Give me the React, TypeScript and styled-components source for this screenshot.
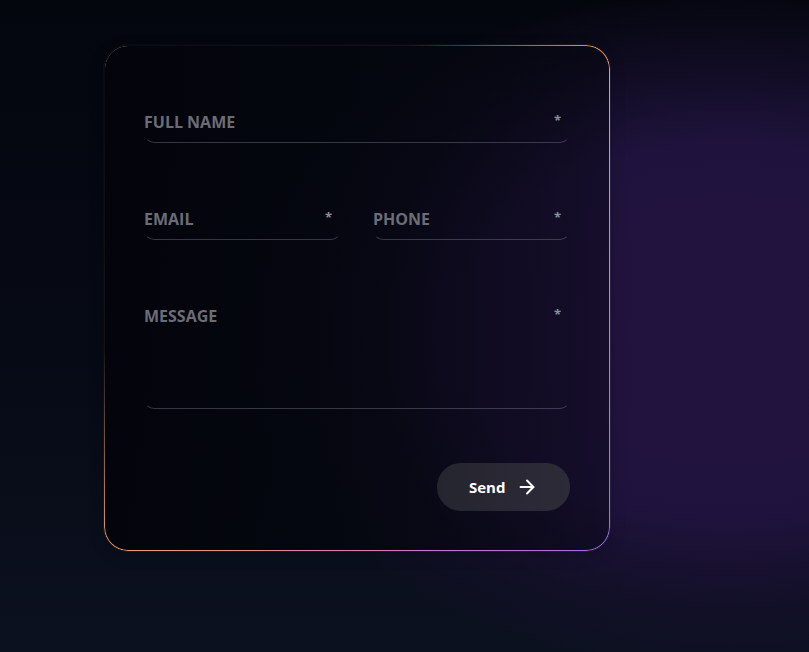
import React from "react";
import styled, { createGlobalStyle } from "styled-components";
import { ArrowRight } from "lucide-react";

const Global = createGlobalStyle`
  html, body { margin: 0; padding: 0; }
  body {
    width: 809px;
    height: 652px;
    overflow: hidden;
    font-family: "Open Sans", "Noto Sans", sans-serif;
    background: #05070f;
  }
  * { box-sizing: border-box; }
`;

const Page = styled.div`
  position: relative;
  width: 809px;
  height: 652px;
  padding: 45px 0 0 104px;
  background:
    radial-gradient(ellipse 500px 340px at 730px 330px, rgba(34, 18, 62, 1) 0%, rgba(32, 19, 62, 0.96) 55%, rgba(26, 16, 50, 0.5) 80%, rgba(20, 12, 40, 0) 100%),
    linear-gradient(180deg, #04060e 0%, #060a15 55%, #0c1120 100%);
`;

const Card = styled.form`
  position: relative;
  width: 506px;
  height: 506px;
  border-radius: 24px;
  padding: 50px 40px 39px;
  display: flex;
  flex-direction: column;
  background: linear-gradient(90deg, rgba(3, 4, 11, 0.95) 0%, rgba(4, 6, 14, 0.88) 45%, rgba(6, 6, 16, 0.4) 100%);
  box-shadow: 0 0 0 1px rgba(255, 255, 255, 0.06), 0 4px 16px rgba(0, 0, 0, 0.18);

  &::before {
    content: "";
    position: absolute;
    inset: 0;
    border-radius: 24px;
    padding: 1px;
    background: linear-gradient(135deg, #f0a35c 0%, #f2a060 48%, #e87aa8 72%, #9b6cf0 100%);
    -webkit-mask:
      linear-gradient(#000 0 0) content-box,
      linear-gradient(#000 0 0);
    -webkit-mask-composite: xor;
    mask-composite: exclude;
    pointer-events: none;
  }
  &::after {
    content: "";
    position: absolute;
    inset: -1px;
    border-radius: 25px;
    pointer-events: none;
    background: linear-gradient(135deg, rgba(8, 10, 20, 1) 0%, rgba(8, 10, 20, 0.95) 30%, rgba(8, 10, 20, 0) 50%);
    padding: 2px;
    -webkit-mask:
      linear-gradient(#000 0 0) content-box,
      linear-gradient(#000 0 0);
    -webkit-mask-composite: xor;
    mask-composite: exclude;
  }
`;

const Row = styled.div`
  display: flex;
  gap: 32px;
`;

const Field = styled.label<{ $tall?: boolean; $mt?: number }>`
  position: relative;
  flex: 1;
  display: flex;
  align-items: flex-start;
  justify-content: space-between;
  height: ${(p) => (p.$tall ? 120 : 48)}px;
  margin-top: ${(p) => p.$mt ?? 0}px;
  padding: 15px 8px 0 0;
  border: 1px solid transparent;
  border-bottom-color: rgba(160, 160, 180, 0.32);
  border-radius: 0 0 10px 10px;
`;

const Label = styled.span`
  margin-left: -1px;
  font-size: 16px;
  font-weight: 700;
  color: #6c6c76;
  text-transform: uppercase;
  line-height: 22px;
`;

const Star = styled.span`
  font-size: 13px;
  font-weight: 700;
  color: #8d8d98;
  line-height: 13px;
  margin-top: 3px;
`;

const Footer = styled.div`
  display: flex;
  justify-content: flex-end;
  margin-top: 54px;
`;

const Button = styled.button`
  display: flex;
  align-items: center;
  gap: 11px;
  height: 48px;
  width: 133px;
  padding: 0 0 0 32px;
  border: none;
  border-radius: 24px;
  background: linear-gradient(90deg, #25252f 0%, #2c2b38 100%);
  color: #ffffff;
  font-family: "Open Sans", "Noto Sans", sans-serif;
  font-size: 15px;
  font-weight: 700;
  cursor: pointer;
`;

export default function App() {
  return (
    <>
      <Global />
      <Page>
        <Card onSubmit={(e) => e.preventDefault()}>
          <Row>
            <Field>
              <Label>Full Name</Label>
              <Star>*</Star>
            </Field>
          </Row>
          <Row>
            <Field $mt={49}>
              <Label>Email</Label>
              <Star>*</Star>
            </Field>
            <Field $mt={49}>
              <Label>Phone</Label>
              <Star>*</Star>
            </Field>
          </Row>
          <Row>
            <Field $tall $mt={49}>
              <Label>Message</Label>
              <Star>*</Star>
            </Field>
          </Row>
          <Footer>
            <Button type="submit">
              Send
              <ArrowRight size={22} strokeWidth={2.2} />
            </Button>
          </Footer>
        </Card>
      </Page>
    </>
  );
}
